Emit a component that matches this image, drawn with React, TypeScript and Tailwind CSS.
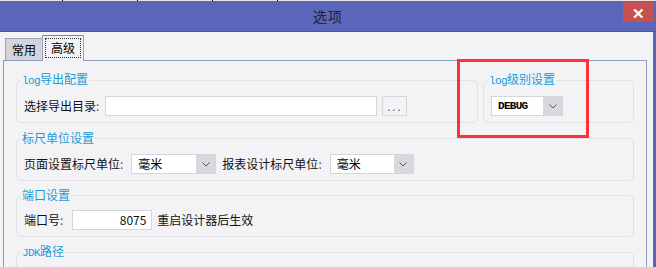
import type { ReactNode } from 'react'

const cjk = "font-['Noto_Sans_CJK_SC','Noto_Sans',sans-serif]"
const mono = "font-[family-name:'Liberation_Mono',monospace]"

function Chevron() {
  return (
    <svg width="8" height="5" viewBox="0 0 8 5" className="text-[#555]">
      <polyline points="0.5,0.5 4,4 7.5,0.5" fill="none" stroke="currentColor" strokeWidth="1" />
    </svg>
  )
}

function Group({ title, className = '', children }: { title: ReactNode; className?: string; children: ReactNode }) {
  return (
    <fieldset className={`rounded-[5px] border border-[#e1e1e6] pl-[7px] pt-[7px] pb-[6px] ${className}`}>
      <legend className="ml-[-3px] px-[1px] text-[12px] leading-4 text-[#1a9bd8]">{title}</legend>
      {children}
    </fieldset>
  )
}

function Label({ text, className = '' }: { text: string; className?: string }) {
  return (
    <span className={`text-[12px] leading-4 text-[#111] ${className}`}>
      {text}
      <span className="text-[#6b3c7c]">:</span>
    </span>
  )
}

function Select({ value, width, monoText = false }: { value: string; width: string; monoText?: boolean }) {
  return (
    <div className={`flex h-5 ${width} border border-[#d6d6da] bg-white`}>
      <div className={`flex flex-1 items-center pl-[6px] ${monoText ? `${mono} text-[11px] font-bold tracking-[-0.7px]` : 'text-[12px]'} text-black`}>
        {value}
      </div>
      <div className="flex w-[19px] items-center justify-center bg-[#d9d9dd]">
        <Chevron />
      </div>
    </div>
  )
}

export default function App() {
  return (
    <div className={`relative h-[267px] w-[656px] overflow-hidden bg-[#f3f3f6] ${cjk}`}>
      <div className="flex h-px bg-[#e6e6e6]">
        <div className="ml-[62px] w-px bg-black" />
        <div className="ml-[74px] w-px bg-black" />
        <div className="ml-[74px] w-px bg-black" />
        <div className="ml-[64px] w-px bg-black" />
      </div>

      {/* title bar */}
      <div className="relative flex h-[31px] items-center justify-center border-b border-[#4b54a3] bg-[#5b65b9]">
        <span className="text-[14px] tracking-[1px] text-[#22232e]">选项</span>
        <div className="absolute right-[2px] top-[1px] flex h-5 w-[31px] items-center justify-center bg-[#c75050] text-[15px] font-bold leading-none text-white">
          ✕
        </div>
      </div>

      <div className="h-[235px] border-r-[3px] border-[#5b65b9] pl-[3px] pr-[6px] pt-[3px]">
        {/* tabs */}
        <div className="relative z-10 flex items-end pl-[2px]">
          <div className="flex h-[22px] w-[38px] items-center justify-center border-l border-r border-t border-[#95a3be] bg-[#d5d5d9] text-[12px] text-black">
            常用
          </div>
          <div className="-mb-px -ml-px flex h-[26px] w-[42px] flex-col border-l border-r border-[#95a3be] bg-[#f3f3f6]">
            <div className="h-[2px] bg-[#3f96e6]" />
            <div className="flex flex-1 p-[2px] pb-[3px]">
              <div className="flex flex-1 items-center justify-center border border-dotted border-[#333] text-[12px] text-black">
                高级
              </div>
            </div>
          </div>
        </div>

        {/* tab panel */}
        <div className="h-[300px] border border-[#8c9cbb] px-3 pt-[10px]">
          <div className="flex gap-[5px]">
            <Group
              className="w-[462px]"
              title={
                <>
                  <span className={`${mono} text-[11px] tracking-[-0.6px]`}>log</span>导出配置
                </>
              }
            >
              <div className="flex items-center">
                <Label text="选择导出目录" />
                <div className="ml-[6px] h-5 w-[272px] border border-[#d6d6da] bg-white" />
                <div className="ml-[5px] flex h-5 w-[25px] items-end justify-center border border-[#d6d6da] bg-[#f3f3f6] pb-[3px] text-[11px] leading-3 tracking-[2px] text-[#6b3c7c]">
                  ...
                </div>
              </div>
            </Group>
            <Group
              className="flex-1"
              title={
                <>
                  <span className={`${mono} text-[11px] tracking-[-0.6px]`}>log</span>级别设置
                </>
              }
            >
              <Select value="DEBUG" width="w-[72px]" monoText />
            </Group>
          </div>

          <Group className="mt-[7px] pt-[8px]" title="标尺单位设置">
            <div className="flex items-center">
              <Label text="页面设置标尺单位" />
              <div className="ml-[8px]">
                <Select value="毫米" width="w-[85px]" />
              </div>
              <Label text="报表设计标尺单位" className="ml-[6px]" />
              <div className="ml-[8px]">
                <Select value="毫米" width="w-[84px]" />
              </div>
            </div>
          </Group>

          <Group className="mt-[6px]" title="端口设置">
            <div className="flex items-center">
              <Label text="端口号" />
              <div className="ml-[9px] flex h-5 w-[80px] items-center justify-end border border-[#d6d6da] bg-white pr-[5px] text-[12px] text-[#111]">
                8075
              </div>
              <span className="ml-[5px] text-[12px] leading-4 text-[#111]">重启设计器后生效</span>
            </div>
          </Group>

          <Group
            className="mt-[6px]"
            title={
              <>
                <span className={`${mono} text-[11px] tracking-[-0.6px]`}>JDK</span>路径
              </>
            }
          >
            <div className="flex h-5 items-center">
              <div className="w-[48px]" />
              <div className="ml-[6px] h-5 w-[280px] border border-[#d6d6da] bg-white" />
              <div className="ml-px h-5 w-[20px] border border-[#d6d6da] bg-[#f3f3f6]" />
            </div>
          </Group>
        </div>
      </div>

      {/* red annotation box */}
      <div className="pointer-events-none absolute left-[457px] top-[59px] h-[79px] w-[132px] border-[3px] border-[#ff3333]" />
    </div>
  )
}
